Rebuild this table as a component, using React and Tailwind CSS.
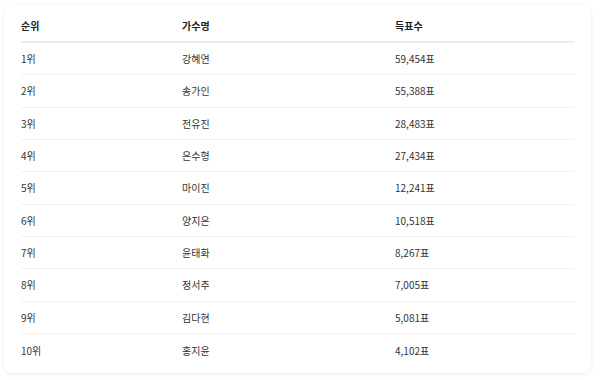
const rows = [
  ["1위", "강혜연", "59,454표"],
  ["2위", "송가인", "55,388표"],
  ["3위", "전유진", "28,483표"],
  ["4위", "은수형", "27,434표"],
  ["5위", "마이진", "12,241표"],
  ["6위", "양지은", "10,518표"],
  ["7위", "윤태화", "8,267표"],
  ["8위", "정서주", "7,005표"],
  ["9위", "김다현", "5,081표"],
  ["10위", "홍지윤", "4,102표"],
];

export default function App() {
  return (
    <div className="w-[600px] h-[380px] bg-white pt-[5px] pl-[4px]" style={{ fontFamily: '"Noto Sans CJK KR", "Noto Sans", sans-serif' }}>
      <div className="w-[587px] h-[368px] bg-white rounded-lg shadow-[0_1px_4px_rgba(0,0,0,0.08)] px-[17px] pt-[4px]">
        {/* Header */}
        <div className="grid grid-cols-[161px_213px_1fr] items-center h-[34px] border-b-2 border-[#ececec] text-[10px] font-semibold text-[#222]">
          <div>순위</div>
          <div>가수명</div>
          <div>득표수</div>
        </div>
        {/* Rows */}
        {rows.map(([rank, name, votes], i) => (
          <div key={rank} className={`grid grid-cols-[161px_213px_1fr] items-center h-[32.33px] text-[10px] text-[#333] ${i < rows.length - 1 ? "border-b border-[#f2f2f2]" : ""}`}>
            <div>{rank}</div>
            <div>{name}</div>
            <div>{votes}</div>
          </div>
        ))}
      </div>
    </div>
  );
}
